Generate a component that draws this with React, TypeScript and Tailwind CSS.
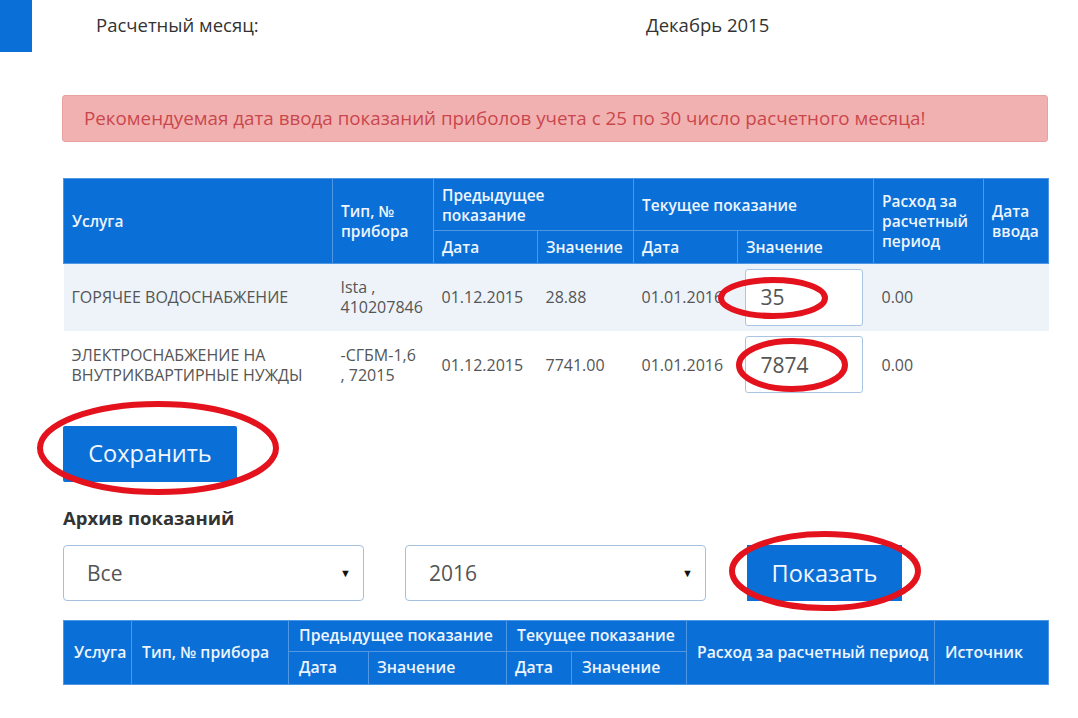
import React from 'react';

const font = { fontFamily: '"Open Sans", "Noto Sans", sans-serif' };

const th = 'border border-[#4f97e4] px-2 align-middle text-left font-semibold leading-[20px]';
const th2 = 'border border-[#4f97e4] px-[10px] align-middle text-left font-semibold whitespace-nowrap';

function Marks() {
  // red hand-drawn ellipses over the screenshot
  return (
    <svg
      className="pointer-events-none absolute left-0 top-0"
      width="1078"
      height="718"
      viewBox="0 0 1078 718"
    >
      <g fill="none" stroke="#e3121c" strokeWidth="6">
        <ellipse cx="773" cy="298" rx="52" ry="18" />
        <ellipse cx="792" cy="365" rx="53" ry="24" />
        <ellipse cx="158" cy="448" rx="118" ry="44" />
        <ellipse cx="825" cy="571" rx="93" ry="37" />
      </g>
    </svg>
  );
}

function ValueInput(props: { value: string }) {
  return (
    <div className="flex h-[57px] w-[118px] items-center rounded-[3px] border border-[#a8c6e4] bg-white pl-[15px] text-[21px] text-[#555]">
      {props.value}
    </div>
  );
}

function Select(props: { value: string }) {
  return (
    <div className="flex h-[56px] w-[301px] items-center justify-between rounded-[4px] border border-[#a3c0de] bg-white pl-[23px] pr-[12px] text-[21px] text-[#555]">
      <span>{props.value}</span>
      <span className="text-[11px] text-[#111]">▼</span>
    </div>
  );
}

export default function App() {
  return (
    <div className="relative h-[718px] w-[1078px] overflow-hidden bg-white text-[#333]" style={font}>
      <div className="flex h-[52px] text-[18.5px]">
        <div className="h-[52px] w-[32px] bg-[#0a6fd6]" />
        <div className="w-[614px] pl-[64px] pt-[11px]">Расчетный месяц:</div>
        <div className="pt-[11px]">Декабрь 2015</div>
      </div>

      <div className="pl-[62px] pr-[30px]">
        <div className="mt-[43px] flex h-[47px] w-[986px] items-center rounded-[3px] border border-[#e7a3a3] bg-[#f2b1b1] pl-[21px] text-[18.8px] text-[#c9474c]">
          Рекомендуемая дата ввода показаний приболов учета с 25 по 30 число расчетного месяца!
        </div>

        <table className="mt-[36px] ml-[1px] w-[985px] table-fixed border-collapse text-[15.5px]">
          <colgroup>
            <col className="w-[269px]" />
            <col className="w-[101px]" />
            <col className="w-[104px]" />
            <col className="w-[96px]" />
            <col className="w-[104px]" />
            <col className="w-[136px]" />
            <col className="w-[110px]" />
            <col className="w-[65px]" />
          </colgroup>
          <thead className="bg-[#0a6fd6] text-[#eef5ff]">
            <tr className="h-[52px]">
              <th rowSpan={2} className={th}>Услуга</th>
              <th rowSpan={2} className={th}>Тип, №<br />прибора</th>
              <th colSpan={2} className={th}>Предыдущее<br />показание</th>
              <th colSpan={2} className={th}>Текущее показание</th>
              <th rowSpan={2} className={th}>Расход за<br />расчетный<br />период</th>
              <th rowSpan={2} className={th}>Дата<br />ввода</th>
            </tr>
            <tr className="h-[33px]">
              <th className={th}>Дата</th>
              <th className={th}>Значение</th>
              <th className={th}>Дата</th>
              <th className={th}>Значение</th>
            </tr>
          </thead>
          <tbody className="text-[16px] leading-[20px] text-[#555]">
            <tr className="h-[67px] bg-[#edf3f9]">
              <td className="px-2">ГОРЯЧЕЕ ВОДОСНАБЖЕНИЕ</td>
              <td className="px-2">Ista ,<br />410207846</td>
              <td className="px-2">01.12.2015</td>
              <td className="px-2">28.88</td>
              <td className="px-2">01.01.2016</td>
              <td className="pl-[7px]"><ValueInput value="35" /></td>
              <td className="px-2">0.00</td>
              <td />
            </tr>
            <tr className="h-[68px]">
              <td className="px-2">ЭЛЕКТРОСНАБЖЕНИЕ НА<br />ВНУТРИКВАРТИРНЫЕ НУЖДЫ</td>
              <td className="px-2">-СГБМ-1,6<br />, 72015</td>
              <td className="px-2">01.12.2015</td>
              <td className="px-2">7741.00</td>
              <td className="px-2">01.01.2016</td>
              <td className="pl-[7px]"><ValueInput value="7874" /></td>
              <td className="px-2">0.00</td>
              <td />
            </tr>
          </tbody>
        </table>

        <button className="ml-[1px] mt-[27px] flex h-[56px] w-[174px] items-center justify-center rounded-[2px] bg-[#0a6fd6] text-[23.5px] text-[#f2f7ff]">
          Сохранить
        </button>

        <div className="ml-[1px] mt-[22px] text-[18.5px] font-bold text-[#333]">Архив показаний</div>

        <div className="ml-[1px] mt-[14px] flex items-center">
          <Select value="Все" />
          <div className="ml-[41px]"><Select value="2016" /></div>
          <button className="ml-[41px] flex h-[56px] w-[155px] items-center justify-center bg-[#0a6fd6] text-[23.5px] text-[#f2f7ff]">
            Показать
          </button>
        </div>

        <table className="mt-[19px] ml-[1px] w-[985px] table-fixed border-collapse bg-[#0a6fd6] text-[15.8px] text-[#eef5ff]">
          <colgroup>
            <col className="w-[68px]" />
            <col className="w-[157px]" />
            <col className="w-[80px]" />
            <col className="w-[138px]" />
            <col className="w-[65px]" />
            <col className="w-[115px]" />
            <col className="w-[248px]" />
            <col className="w-[114px]" />
          </colgroup>
          <thead>
            <tr className="h-[31px]">
              <th rowSpan={2} className={th2 + ' px-0 text-center'}>Услуга</th>
              <th rowSpan={2} className={th2 + ' text-center'}>Тип, № прибора</th>
              <th colSpan={2} className={th2}>Предыдущее показание</th>
              <th colSpan={2} className={th2}>Текущее показание</th>
              <th rowSpan={2} className={th2 + ' px-0 text-center'}>Расход за расчетный период</th>
              <th rowSpan={2} className={th2 + ' text-center'}>Источник</th>
            </tr>
            <tr className="h-[33px]">
              <th className={th2}>Дата</th>
              <th className={th2 + ' pl-2'}>Значение</th>
              <th className={th2 + ' pl-2'}>Дата</th>
              <th className={th2}>Значение</th>
            </tr>
          </thead>
        </table>
      </div>

      <Marks />
    </div>
  );
}
